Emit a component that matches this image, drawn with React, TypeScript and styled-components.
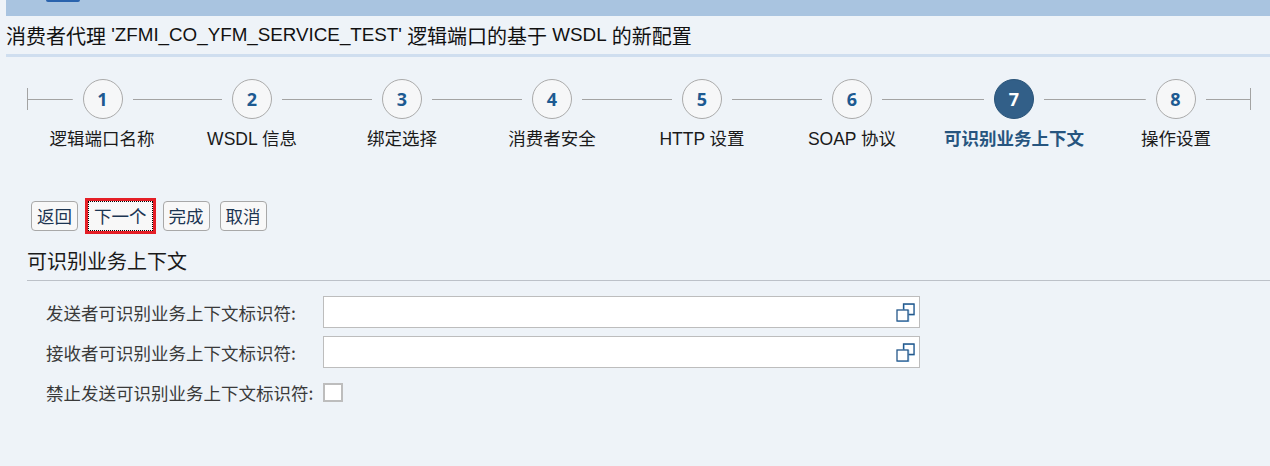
import React from "react";
import styled, { createGlobalStyle, css } from "styled-components";

const GlobalStyle = createGlobalStyle`
  html, body {
    margin: 0;
    padding: 0;
    background: #eef3f8;
  }
  body {
    font-family: "Liberation Sans", "Noto Sans CJK SC", sans-serif;
    color: #222;
  }
`;

const Page = styled.div`
  width: 1270px;
  height: 466px;
  overflow: hidden;
  padding-left: 6px;
  box-sizing: border-box;
  background: #eef3f8;
`;

const TopBand = styled.div`
  height: 16px;
  background: #a9c4e0;
  display: flex;
  padding-left: 40px;
`;

const TabStub = styled.div`
  width: 34px;
  height: 2px;
  background: #2a63ad;
  border-radius: 0 0 2px 2px;
`;

const TitleBar = styled.div`
  height: 38px;
  display: flex;
  align-items: center;
  font-size: 20px;
  color: #111;
  border-bottom: 3px solid #cfdeef;
  white-space: nowrap;
`;

const TitleLatin = styled.span`
  font-size: 18.8px;
`;

const Stepper = styled.div`
  display: flex;
  margin: 22px 0 0 21px;
`;

const Step = styled.div`
  flex: 0 0 auto;
  min-width: 150px;
  display: flex;
  flex-direction: column;
`;

const Track = styled.div`
  height: 40px;
  display: flex;
  align-items: center;
  gap: 10px;
`;

const Line = styled.div<{ $capStart?: boolean; $capEnd?: boolean }>`
  flex: 1;
  height: 22px;
  box-sizing: border-box;
  background: linear-gradient(#a3a3a3, #a3a3a3) center / 100% 1px no-repeat;
  ${(p) => p.$capStart && css`border-left: 1px solid #a3a3a3;`}
  ${(p) => p.$capEnd && css`border-right: 1px solid #a3a3a3;`}
`;

const Circle = styled.div<{ $active?: boolean }>`
  width: 40px;
  height: 40px;
  box-sizing: border-box;
  border-radius: 50%;
  display: flex;
  align-items: center;
  justify-content: center;
  font-family: "Noto Sans", sans-serif;
  font-weight: 700;
  font-size: 18px;
  border: 1px solid ${(p) => (p.$active ? "#2a5479" : "#aaaaaa")};
  background: ${(p) => (p.$active ? "#325f88" : "#f6f7f8")};
  color: ${(p) => (p.$active ? "#ffffff" : "#1d5a91")};
`;

const StepLabel = styled.div<{ $active?: boolean }>`
  margin-top: 8px;
  padding: 0 17px;
  text-align: center;
  white-space: nowrap;
  font-size: 17.5px;
  line-height: 24px;
  font-weight: ${(p) => (p.$active ? 700 : 400)};
  color: ${(p) => (p.$active ? "#27557f" : "#1a1a1a")};
`;

const Toolbar = styled.div`
  display: flex;
  gap: 10px;
  margin: 50px 0 0 25px;
`;

const Button = styled.button<{ $focused?: boolean }>`
  height: 30px;
  padding: 0 5px;
  box-sizing: border-box;
  font-family: "Noto Sans CJK SC", sans-serif;
  font-size: 17.5px;
  line-height: 1;
  color: #1c3552;
  background: #f8f8f8;
  border: 1px solid #a8a8a8;
  border-radius: 4px;
  ${(p) =>
    p.$focused &&
    css`
      border: 1px dotted #000;
      border-radius: 0;
      outline: 3px solid #e41e26;
    `}
`;

const Section = styled.div`
  margin: 16px 0 0 21px;
`;

const SectionTitle = styled.div`
  font-family: "Noto Sans CJK SC", sans-serif;
  font-size: 20px;
  line-height: 28px;
  color: #1a1a1a;
  padding-bottom: 5px;
  border-bottom: 1px solid #bcc1c8;
`;

const Form = styled.div`
  display: grid;
  grid-template-columns: 277px 597px;
  grid-auto-rows: 32px;
  row-gap: 8px;
  align-items: center;
  margin: 15px 0 0 19px;
`;

const FieldLabel = styled.label`
  font-family: "Noto Sans CJK SC", sans-serif;
  font-size: 17.5px;
  color: #3a3a3a;
  white-space: nowrap;
`;

const InputBox = styled.div`
  height: 32px;
  box-sizing: border-box;
  background: #fff;
  border: 1px solid #bdbdbd;
  display: flex;
  align-items: center;
  justify-content: flex-end;
  padding-right: 4px;
`;

const Checkbox = styled.div`
  width: 20px;
  height: 19px;
  box-sizing: border-box;
  border: 2px solid #bdbdbd;
  background: #fff;
`;

const ValueHelpIcon = () => (
  <svg width="19" height="19" viewBox="0 0 19 19" fill="none">
    <path d="M7.5 6.5 V1 H18 V11.5 H12.5" stroke="#8ec4f0" strokeWidth="1" transform="translate(0.8,0.4)" />
    <rect x="1" y="7" width="11" height="11" stroke="#8ec4f0" strokeWidth="1" transform="translate(0.8,0.4)" />
    <path d="M7.5 6.5 V1 H18 V11.5 H12.5" stroke="#25588a" strokeWidth="1.3" />
    <rect x="1" y="7" width="11" height="11" fill="#fff" stroke="#25588a" strokeWidth="1.3" />
  </svg>
);

const steps = [
  "逻辑端口名称",
  "WSDL 信息",
  "绑定选择",
  "消费者安全",
  "HTTP 设置",
  "SOAP 协议",
  "可识别业务上下文",
  "操作设置",
];
const activeStep = 6;

export default function App() {
  return (
    <Page>
      <GlobalStyle />
      <TopBand>
        <TabStub />
      </TopBand>
      <TitleBar>
        消费者代理<TitleLatin>&nbsp;'ZFMI_CO_YFM_SERVICE_TEST'&nbsp;</TitleLatin>逻辑端口的基于
        <TitleLatin>&nbsp;WSDL&nbsp;</TitleLatin>的新配置
      </TitleBar>

      <Stepper>
        {steps.map((label, i) => (
          <Step key={label}>
            <Track>
              <Line $capStart={i === 0} />
              <Circle $active={i === activeStep}>{i + 1}</Circle>
              <Line $capEnd={i === steps.length - 1} />
            </Track>
            <StepLabel $active={i === activeStep}>{label}</StepLabel>
          </Step>
        ))}
      </Stepper>

      <Toolbar>
        <Button>返回</Button>
        <Button $focused>下一个</Button>
        <Button>完成</Button>
        <Button>取消</Button>
      </Toolbar>

      <Section>
        <SectionTitle>可识别业务上下文</SectionTitle>
        <Form>
          <FieldLabel>发送者可识别业务上下文标识符:</FieldLabel>
          <InputBox>
            <ValueHelpIcon />
          </InputBox>
          <FieldLabel>接收者可识别业务上下文标识符:</FieldLabel>
          <InputBox>
            <ValueHelpIcon />
          </InputBox>
          <FieldLabel>禁止发送可识别业务上下文标识符:</FieldLabel>
          <Checkbox />
        </Form>
      </Section>
    </Page>
  );
}
